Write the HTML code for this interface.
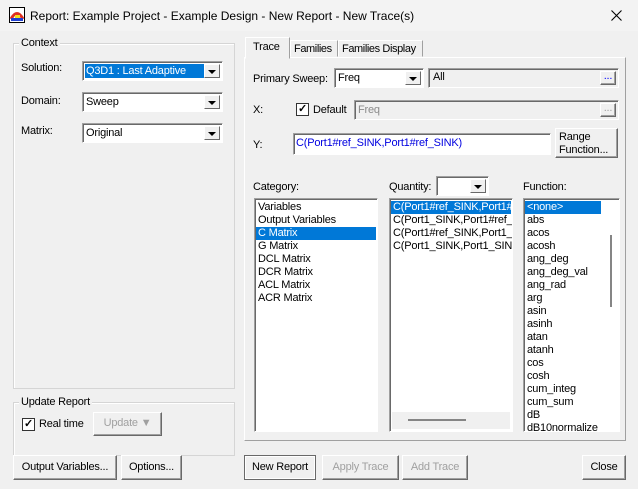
<!DOCTYPE html>
<html><head><style>
*{box-sizing:border-box;margin:0;padding:0}
body{width:638px;height:489px;background:#f0f0f0;font-family:"Liberation Sans",sans-serif;font-size:11px;letter-spacing:-0.2px;color:#000;position:relative;overflow:hidden}
.a{position:absolute;white-space:nowrap}
.grp{position:absolute;border:1px solid #d5d5d5;box-shadow:inset 1px 1px 0 #fff}
.gl{position:absolute;background:#f0f0f0;padding:0 2px;top:-7px;left:5px}
.fld{position:absolute;background:#fff;border:1px solid;border-color:#a0a0a0 #fff #fff #a0a0a0;box-shadow:inset 1px 1px 0 #696969}
.btn{position:absolute;background:#f0f0f0;border:1px solid;border-color:#fff #696969 #696969 #fff;box-shadow:inset -1px -1px 0 #a0a0a0;text-align:center}
.dd{position:absolute;right:2px;top:2px;bottom:2px;width:16px;background:#f0f0f0;border:1px solid;border-color:#fff #696969 #696969 #fff}
.dd:after{content:"";position:absolute;left:3px;top:5px;border:4px solid transparent;border-top:4px solid #000}
.sel{background:#0078d7;color:#fff}
.row{height:13px;line-height:13px;padding-left:2px}
.cb{position:absolute;width:13px;height:13px;background:#fff;border:1px solid #333;font-size:11px;line-height:11px;text-align:center;font-weight:bold}
</style></head><body>
<div class="a" style="left:0;top:0;width:638px;height:31px;background:#f3f3f3"></div>
<svg class="a" style="left:9px;top:7px" width="16" height="16"><rect x="0.5" y="0.5" width="15" height="15" fill="#fff" stroke="#000"/><path d="M2 12 Q8 1 14 12" stroke="#e03020" stroke-width="3" fill="none"/><rect x="2" y="11" width="12" height="3" fill="#2040d0"/><rect x="6" y="8" width="5" height="3" fill="#f0e020"/></svg>
<div class="a" style="left:30px;top:9px;font-size:12px;letter-spacing:0">Report: Example Project - Example Design - New Report - New Trace(s)</div>
<svg class="a" style="left:611px;top:10px" width="11" height="11"><path d="M0.5 0.5L10.5 10.5M10.5 0.5L0.5 10.5" stroke="#000" stroke-width="1.1"/></svg>

<div class="grp" style="left:13px;top:43px;width:222px;height:346px"><div class="gl">Context</div></div>
<div class="a" style="left:21px;top:62px">Solution:</div>
<div class="fld" style="left:82px;top:61px;width:141px;height:20px"><div class="a sel" style="left:2px;top:2px;width:119px;height:14px;padding-left:1px;line-height:14px">Q3D1 : Last Adaptive</div><div class="dd"></div></div>
<div class="a" style="left:21px;top:95px">Domain:</div>
<div class="fld" style="left:82px;top:92px;width:141px;height:20px"><div class="a" style="left:3px;top:3px">Sweep</div><div class="dd"></div></div>
<div class="a" style="left:21px;top:125px">Matrix:</div>
<div class="fld" style="left:82px;top:123px;width:141px;height:20px"><div class="a" style="left:3px;top:3px">Original</div><div class="dd"></div></div>

<div class="grp" style="left:13px;top:402px;width:222px;height:54px"><div class="gl">Update Report</div></div>
<div class="cb" style="left:22px;top:418px">✓</div>
<div class="a" style="left:39px;top:418px">Real time</div>
<div class="btn" style="left:93px;top:412px;width:69px;height:24px;color:#a0a0a0;line-height:21px">Update ▼</div>

<div class="btn" style="left:13px;top:455px;width:104px;height:25px;line-height:22px">Output Variables...</div>
<div class="btn" style="left:121px;top:455px;width:61px;height:25px;line-height:22px">Options...</div>

<div class="a" style="left:244px;top:57px;width:382px;height:384px;border:1px solid;border-color:#fff #a0a0a0 #a0a0a0 #fff"></div>
<div class="a" style="left:245px;top:37px;width:45px;height:22px;background:#f0f0f0;border:1px solid;border-color:#fff #a0a0a0 transparent #fff;padding:3px 0 0 7px">Trace</div>
<div class="a" style="left:290px;top:40px;width:48px;height:17px;border:1px solid;border-color:#fff #a0a0a0 transparent #fff;padding:2px 0 0 3px;letter-spacing:-0.4px">Families</div>
<div class="a" style="left:338px;top:40px;width:85px;height:17px;border:1px solid;border-color:#fff #a0a0a0 transparent #fff;padding:2px 0 0 3px;letter-spacing:-0.4px">Families Display</div>

<div class="a" style="left:253px;top:73px">Primary Sweep:</div>
<div class="fld" style="left:334px;top:68px;width:90px;height:20px"><div class="a" style="left:3px;top:3px">Freq</div><div class="dd"></div></div>
<div class="fld" style="left:428px;top:68px;width:191px;height:20px;background:#f0f0f0"><div class="a" style="left:4px;top:2px">All</div><div class="btn" style="right:2px;top:2px;width:16px;height:14px;line-height:9px;color:#00f">...</div></div>
<div class="a" style="left:253px;top:104px">X:</div>
<div class="cb" style="left:296px;top:103px">✓</div>
<div class="a" style="left:313px;top:104px">Default</div>
<div class="fld" style="left:354px;top:100px;width:265px;height:20px;background:#f0f0f0"><div class="a" style="left:3px;top:3px;color:#8a8a8a">Freq</div><div class="btn" style="right:2px;top:2px;width:16px;height:14px;line-height:9px;color:#a0a0a0">...</div></div>
<div class="a" style="left:253px;top:139px">Y:</div>
<div class="fld" style="left:293px;top:133px;width:258px;height:22px"><div class="a" style="left:2px;top:3px;color:#0000e0">C(Port1#ref_SINK,Port1#ref_SINK)</div></div>
<div class="btn" style="left:555px;top:128px;width:63px;height:30px;text-align:left;padding:2px 0 0 3px;line-height:13px">Range<br>Function...</div>

<div class="a" style="left:253px;top:181px">Category:</div>
<div class="a" style="left:389px;top:181px">Quantity:</div>
<div class="fld" style="left:436px;top:176px;width:53px;height:20px"><div class="dd"></div></div>
<div class="a" style="left:523px;top:181px">Function:</div>

<div class="fld" style="left:254px;top:198px;width:124px;height:234px;padding:2px 1px">
<div class="row">Variables</div><div class="row">Output Variables</div><div class="row sel">C Matrix</div><div class="row">G Matrix</div><div class="row">DCL Matrix</div><div class="row">DCR Matrix</div><div class="row">ACL Matrix</div><div class="row">ACR Matrix</div></div>
<div class="fld" style="left:389px;top:198px;width:124px;height:234px;padding:2px 1px;overflow:hidden">
<div class="row sel">C(Port1#ref_SINK,Port1#ref_SINK)</div><div class="row">C(Port1_SINK,Port1#ref_SINK)</div><div class="row">C(Port1#ref_SINK,Port1_SINK)</div><div class="row">C(Port1_SINK,Port1_SINK)</div>
<div class="a" style="left:2px;bottom:2px;width:118px;height:17px;background:#f0f0f0"><div class="a" style="left:16px;top:7px;width:58px;height:2px;background:#858585"></div></div></div>
<div class="fld" style="left:523px;top:198px;width:97px;height:234px;padding:2px 1px;overflow:hidden">
<div class="row sel" style="width:76px">&lt;none&gt;</div><div class="row">abs</div><div class="row">acos</div><div class="row">acosh</div><div class="row">ang_deg</div><div class="row">ang_deg_val</div><div class="row">ang_rad</div><div class="row">arg</div><div class="row">asin</div><div class="row">asinh</div><div class="row">atan</div><div class="row">atanh</div><div class="row">cos</div><div class="row">cosh</div><div class="row">cum_integ</div><div class="row">cum_sum</div><div class="row">dB</div><div class="row">dB10normalize</div>
<div class="a" style="left:86px;top:36px;width:2px;height:72px;background:#858585"></div></div>

<div class="btn" style="left:244px;top:455px;width:72px;height:25px;line-height:22px;border-color:#696969;box-shadow:inset 0 0 0 1px #fff">New Report</div>
<div class="btn" style="left:322px;top:455px;width:77px;height:25px;line-height:22px;color:#a0a0a0">Apply Trace</div>
<div class="btn" style="left:402px;top:455px;width:66px;height:25px;line-height:22px;color:#a0a0a0">Add Trace</div>
<div class="btn" style="left:582px;top:455px;width:44px;height:25px;line-height:22px">Close</div>
</body></html>
